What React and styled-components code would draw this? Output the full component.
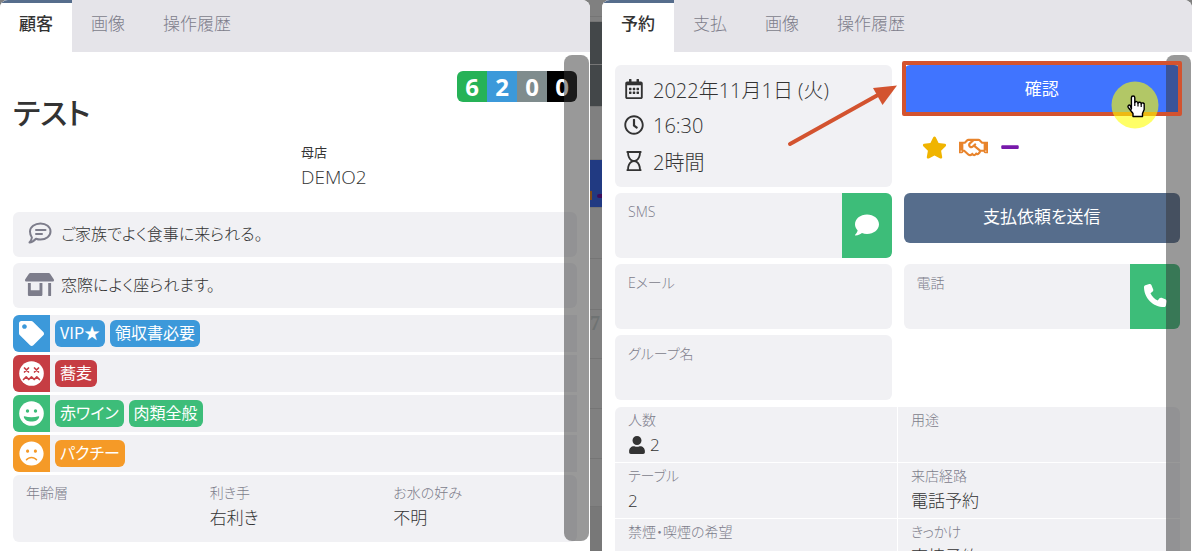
import React from "react";
import styled, { createGlobalStyle } from "styled-components";
import {
  FaStoreAlt,
  FaTag,
  FaFrown,
  FaStar,
  FaRegHandshake,
  FaMinus,
  FaComment,
  FaRegCalendarAlt,
  FaRegClock,
  FaRegHourglass,
  FaUser,
} from "react-icons/fa";
import { FaPhone } from "react-icons/fa6";

const GlobalStyle = createGlobalStyle`
  * {
    box-sizing: border-box;
  }

  body {
    margin: 0;
    background: #808080;
    color: #333;
    font-family: "Open Sans", "Noto Sans CJK JP", sans-serif;
    font-feature-settings: "palt";
    font-weight: 300;
    font-size: 17px;
    overflow: hidden;
  }

  button {
    font: inherit;
    font-feature-settings: inherit;
    border: 0;
    padding: 0;
    cursor: pointer;
  }
`;

const Page = styled.main`
  display: grid;
  grid-template-columns: 1fr 12px 1fr;
  height: 100vh;
`;

const Panel = styled.section`
  position: relative;
  min-width: 0;
  overflow: hidden;
  background: #fff;
  border-radius: 8px 8px 0 0;
`;

const Backdrop = styled.div`
  display: flex;
  flex-direction: column;
  min-width: 0;
  overflow: hidden;
`;

const Strip = styled.div`
  display: flex;
  align-items: flex-end;
  height: ${({ $h }) => $h}px;
  background: ${({ $bg }) => $bg || "#808080"};
  border-bottom: 1px solid #757575;
`;

const RowNumber = styled.span`
  align-self: flex-start;
  color: #6e7272;
  font-family: "Liberation Serif", serif;
  font-size: 20px;
  font-weight: 700;
  line-height: 26px;
`;

const Tabs = styled.div`
  display: flex;
  height: 52px;
  background: #e5e4e9;
`;

const Tab = styled.button`
  height: 52px;
  padding: 0 19px 8px;
  background: ${({ $active }) => ($active ? "#fff" : "transparent")};
  border-top: 3px solid ${({ $active }) => ($active ? "#566d8c" : "transparent")};
  color: ${({ $active }) => ($active ? "#333" : "#7d7d8b")};
  font-weight: ${({ $active }) => ($active ? 500 : 300)};
  line-height: 24px;
`;

const Scrollbar = styled.div`
  position: absolute;
  top: 55px;
  right: 1px;
  bottom: ${({ $bottom }) => $bottom}px;
  z-index: 1;
  width: 25px;
  border-radius: 8px;
  background: rgba(51, 51, 51, 0.5);
  pointer-events: none;
`;

const CustomerBody = styled.div`
  padding: 19px 13px 0;
`;

const Header = styled.div`
  display: flex;
  justify-content: space-between;
  height: 72px;
`;

const Name = styled.h1`
  margin: 20px 0 0;
  font-size: 30px;
  font-weight: 500;
  line-height: 44px;
`;

const Counters = styled.div`
  display: flex;
  height: 31px;
  border-radius: 6px;
  overflow: hidden;
`;

const Counter = styled.span`
  width: 30px;
  background: ${({ $bg }) => $bg};
  color: #fff;
  font-size: 24px;
  font-weight: 700;
  line-height: 32px;
  text-align: center;
`;

const HomeStore = styled.div`
  margin-left: 288px;
  height: 69px;
  font-size: 19px;
  line-height: 26px;
`;

const StoreLabel = styled.div`
  font-size: 13px;
  font-weight: 400;
  line-height: 18px;
  margin-bottom: 3px;
`;

const Memo = styled.div`
  display: flex;
  align-items: center;
  gap: 7px;
  height: 45px;
  margin-bottom: 6px;
  padding: 0 0 3px 12px;
  border-radius: 6px;
  background: #f1f1f4;
  font-size: 16px;
`;

const MemoIcon = styled.span`
  display: flex;
  justify-content: center;
  width: 29px;
  color: #7d7d8b;
`;

const TagList = styled.div`
  display: flex;
  flex-direction: column;
  gap: 3px;
  padding: 1px 0 3px;
`;

const TagRow = styled.div`
  display: flex;
  align-items: center;
  gap: 5px;
  height: 37px;
  border-radius: 6px 0 0 6px;
  background: #f1f1f4;
  overflow: hidden;
`;

const TagIcon = styled.span`
  display: flex;
  align-items: center;
  justify-content: center;
  width: 37px;
  height: 37px;
  background: ${({ $bg }) => $bg};
  color: #fff;
`;

const Tag = styled.span`
  height: 27px;
  padding: 0 5px;
  border-radius: 6px;
  background: ${({ $bg }) => $bg};
  color: #fff;
  font-family: "Noto Sans CJK JP", sans-serif;
  font-size: 16px;
  font-weight: 400;
  line-height: 24px;
`;

const Facts = styled.dl`
  display: grid;
  grid-template-columns: repeat(3, 1fr);
  height: 67px;
  margin: 0;
  padding: 8px 0 0 13px;
  border-radius: 6px;
  background: #f1f1f4;
`;

const Label = styled.dt`
  color: #7d7d8b;
  font-size: 14px;
  line-height: 20px;
`;

const Value = styled.dd`
  display: flex;
  align-items: center;
  gap: 4px;
  margin: 0;
  line-height: 30px;
`;

const BookingBody = styled.div`
  padding: 13px 12px 0 13px;
`;

const BookingGrid = styled.div`
  display: grid;
  grid-template-columns: 1fr 1fr;
  grid-template-rows: 122px 65px 65px 65px;
  gap: 6px 12px;
  margin-bottom: 7px;
`;

const When = styled.div`
  display: flex;
  flex-direction: column;
  padding: 6px 9px;
  border-radius: 6px;
  background: #f1f1f4;
`;

const WhenRow = styled.div`
  display: flex;
  align-items: center;
  gap: 9px;
  height: 36px;
  font-size: 20px;
`;

const Field = styled.dl`
  display: flex;
  justify-content: space-between;
  margin: 0;
  padding-left: 13px;
  border-radius: 6px;
  background: #f1f1f4;
  overflow: hidden;
`;

const FieldLabel = styled(Label)`
  padding-top: 9px;
`;

const FieldAction = styled.dd`
  display: flex;
  margin: 0;
`;

const ContactButton = styled.button`
  display: flex;
  align-items: center;
  justify-content: center;
  width: 50px;
  padding-bottom: 2px;
  background: #3dbd79;
  color: #fff;
`;

const Actions = styled.div`
  position: relative;
`;

const ActionButton = styled.button`
  width: 100%;
  height: 50px;
  padding-bottom: 5px;
  border-radius: 6px;
  background: ${({ $primary }) => ($primary ? "#4074ff" : "#566d8c")};
  color: #fff;
  font-weight: 400;
`;

const Marks = styled.div`
  display: flex;
  align-items: center;
  gap: 12px;
  height: 64px;
  padding-left: 18px;
`;

const Highlight = styled.div`
  position: absolute;
  top: -4px;
  left: -2px;
  right: -2px;
  z-index: 2;
  height: 55px;
  border: 4px solid #d3532f;
  border-radius: 2px;
  pointer-events: none;
`;

const Arrow = styled.svg`
  position: absolute;
  top: 15px;
  left: -117px;
  z-index: 2;
`;

const Pointer = styled.svg`
  position: absolute;
  top: 16px;
  right: 21px;
  z-index: 3;
`;

const Details = styled.dl`
  display: grid;
  grid-template-columns: 1fr 1fr;
  gap: 1px;
  margin: 0;
  border-radius: 6px 6px 0 0;
  overflow: hidden;
`;

const Cell = styled.div`
  height: 55px;
  padding: 3px 13px 0;
  background: #f1f1f4;
`;

const MemoBubble = () => (
  <svg width="24" height="22" viewBox="0 0 24 22" fill="none" stroke="currentColor" strokeWidth="2" strokeLinecap="round" strokeLinejoin="round">
    <path d="M12.500 1.500c5.700 0 10 3.500 10 8s-4.300 8-10 8c-1.700 0-3.200-.3-4.500-.8C6.200 18.500 4 20.300 1.500 20.500c1.300-1.500 2.200-3.200 2.400-5-1-1.300-1.900-3.500-1.900-6 0-4.500 4.800-8 10.500-8z" />
    <path d="M8 8h9.500M8 12h6" />
  </svg>
);

const DizzyFace = () => (
  <svg width="25" height="25" viewBox="0 0 25 25">
    <circle cx="12.5" cy="12.5" r="12.3" fill="#fff" />
    <g fill="none" stroke="#c63d43" strokeWidth="1.7" strokeLinecap="round" strokeLinejoin="round">
      <path d="M5.500 7l4 4M9.500 7l-4 4M15.500 7l4 4M19.500 7l-4 4" />
      <path d="M4.500 18.500l2.700-2.700 2.600 2.700 2.700-2.700 2.700 2.700 2.600-2.700 2.700 2.700" />
    </g>
  </svg>
);

const HappyFace = () => (
  <svg width="25" height="25" viewBox="0 0 25 25">
    <circle cx="12.5" cy="12.5" r="12.3" fill="#fff" />
    <g fill="#3dbd79">
      <circle cx="8.5" cy="10" r="1.7" />
      <circle cx="16.5" cy="10" r="1.7" />
      <path d="M5.500 15.200c4.500 1.500 9.500 1.500 14 0 .5-.1.800.2.700.7-.7 3-3.900 4.600-7.700 4.600s-7-1.600-7.700-4.600c-.1-.5.2-.8.7-.7z" />
    </g>
  </svg>
);

const tagRows = [
  { color: "#3c99da", icon: <FaTag size={25} />, tags: ["VIP★", "領収書必要"] },
  { color: "#c63d43", icon: <DizzyFace />, tags: ["蕎麦"] },
  { color: "#3dbd79", icon: <HappyFace />, tags: ["赤ワイン", "肉類全般"] },
  { color: "#f59a27", icon: <FaFrown size={25} />, tags: ["パクチー"] },
];

const counters = [
  ["#26b257", 6],
  ["#3c99da", 2],
  ["#7f8c8d", 0],
  ["#000", 0],
];

const facts = [
  ["年齢層", ""],
  ["利き手", "右利き"],
  ["お水の好み", "不明"],
];

const details = [
  ["人数", <><FaUser size={18} />2</>],
  ["用途", ""],
  ["テーブル", "2"],
  ["来店経路", "電話予約"],
  ["禁煙・喫煙の希望", ""],
  ["きっかけ", "直接予約"],
];

const TabBar = ({ items }) => (
  <Tabs role="tablist">
    {items.map((item, i) => (
      <Tab key={item} role="tab" aria-selected={i === 0} $active={i === 0}>
        {item}
      </Tab>
    ))}
  </Tabs>
);

const CustomerPanel = () => (
  <Panel>
    <TabBar items={["顧客", "画像", "操作履歴"]} />
    <CustomerBody>
      <Header>
        <Name>テスト</Name>
        <Counters>
          {counters.map(([bg, n]) => (
            <Counter key={bg} $bg={bg}>{n}</Counter>
          ))}
        </Counters>
      </Header>
      <HomeStore>
        <StoreLabel>母店</StoreLabel>
        DEMO2
      </HomeStore>
      <Memo>
        <MemoIcon><MemoBubble /></MemoIcon>
        ご家族でよく食事に来られる。
      </Memo>
      <Memo>
        <MemoIcon><FaStoreAlt size={29} /></MemoIcon>
        窓際によく座られます。
      </Memo>
      <TagList>
        {tagRows.map(({ color, icon, tags }) => (
          <TagRow key={color}>
            <TagIcon $bg={color}>{icon}</TagIcon>
            {tags.map((tag) => (
              <Tag key={tag} $bg={color}>{tag}</Tag>
            ))}
          </TagRow>
        ))}
      </TagList>
      <Facts>
        {facts.map(([label, value]) => (
          <div key={label}>
            <Label>{label}</Label>
            <Value>{value}</Value>
          </div>
        ))}
      </Facts>
    </CustomerBody>
    <Scrollbar $bottom={10} />
  </Panel>
);

const BookingPanel = () => (
  <Panel>
    <TabBar items={["予約", "支払", "画像", "操作履歴"]} />
    <BookingBody>
      <BookingGrid>
        <When>
          <WhenRow><FaRegCalendarAlt size={20} />2022年11月1日 (火)</WhenRow>
          <WhenRow><FaRegClock size={20} />16:30</WhenRow>
          <WhenRow><FaRegHourglass size={20} />2時間</WhenRow>
        </When>
        <Actions>
          <ActionButton $primary>確認</ActionButton>
          <Marks>
            <FaStar size={25} color="#f0b400" />
            <FaRegHandshake size={29} color="#e8842c" />
            <FaMinus size={20} color="#7719aa" />
          </Marks>
          <Highlight />
          <Arrow width="112" height="68" viewBox="0 0 112 68" aria-hidden="true">
            <path d="M3 64L90 15.500" stroke="#d3532f" strokeWidth="4" strokeLinecap="round" />
            <path d="M110 5.500L86 8l9.500 17z" fill="#d3532f" />
          </Arrow>
          <Pointer width="48" height="48" viewBox="0 0 48 48" aria-hidden="true">
            <circle cx="24" cy="24" r="23.5" fill="rgba(255, 255, 0, 0.6)" />
            <path
              d="M20.400 28V16.700a1.700 1.700 0 0 1 3.400 0V21.500a1.700 1.700 0 0 1 3.200.6 1.700 1.700 0 0 1 3.200.8 1.600 1.600 0 0 1 3 1.100V28.500L31.500 32.500V35.500H22V32.500L17.300 26.500C16.200 24.800 18 23.300 19.300 24.700z"
              fill="#fff"
              stroke="#000"
              strokeWidth="1.4"
              strokeLinejoin="round"
            />
            <path d="M23.800 21v4M27 22v3.500M30.200 23v3" stroke="#000" strokeWidth="1.2" />
          </Pointer>
        </Actions>
        <Field>
          <FieldLabel>SMS</FieldLabel>
          <FieldAction>
            <ContactButton aria-label="SMS"><FaComment size={24} /></ContactButton>
          </FieldAction>
        </Field>
        <div>
          <ActionButton>支払依頼を送信</ActionButton>
        </div>
        <Field>
          <FieldLabel>Eメール</FieldLabel>
        </Field>
        <Field>
          <FieldLabel>電話</FieldLabel>
          <FieldAction>
            <ContactButton aria-label="電話"><FaPhone size={23} /></ContactButton>
          </FieldAction>
        </Field>
        <Field>
          <FieldLabel>グループ名</FieldLabel>
        </Field>
      </BookingGrid>
      <Details>
        {details.map(([label, value]) => (
          <Cell key={label}>
            <Label>{label}</Label>
            <Value>{value}</Value>
          </Cell>
        ))}
      </Details>
    </BookingBody>
    <Scrollbar $bottom={-10} />
  </Panel>
);

export default function App() {
  return (
    <>
      <GlobalStyle />
      <Page>
        <CustomerPanel />
        <Backdrop>
          <Strip $h={17} />
          <Strip $h={5} />
          <Strip $h={43} $bg="#434749" />
          <Strip $h={42} $bg="#434749" />
          <Strip $h={53} />
          <Strip $h={48} $bg="#213a82">
            <svg width="12" height="18" viewBox="0 0 12 18" aria-hidden="true">
              <path d="M0 2h2v9H0z" fill="#7d4a1c" />
              <path d="M9 7h3" stroke="#3f0d5a" strokeWidth="4" strokeLinecap="round" />
            </svg>
          </Strip>
          <Strip $h={51} />
          <Strip $h={51} />
          <Strip $h={49}>
            <RowNumber>7</RowNumber>
          </Strip>
          <Strip $h={50} />
          <Strip $h={50} />
          <Strip $h={48} />
          <Strip $h={44} $bg="#787878" />
        </Backdrop>
        <BookingPanel />
      </Page>
    </>
  );
}
